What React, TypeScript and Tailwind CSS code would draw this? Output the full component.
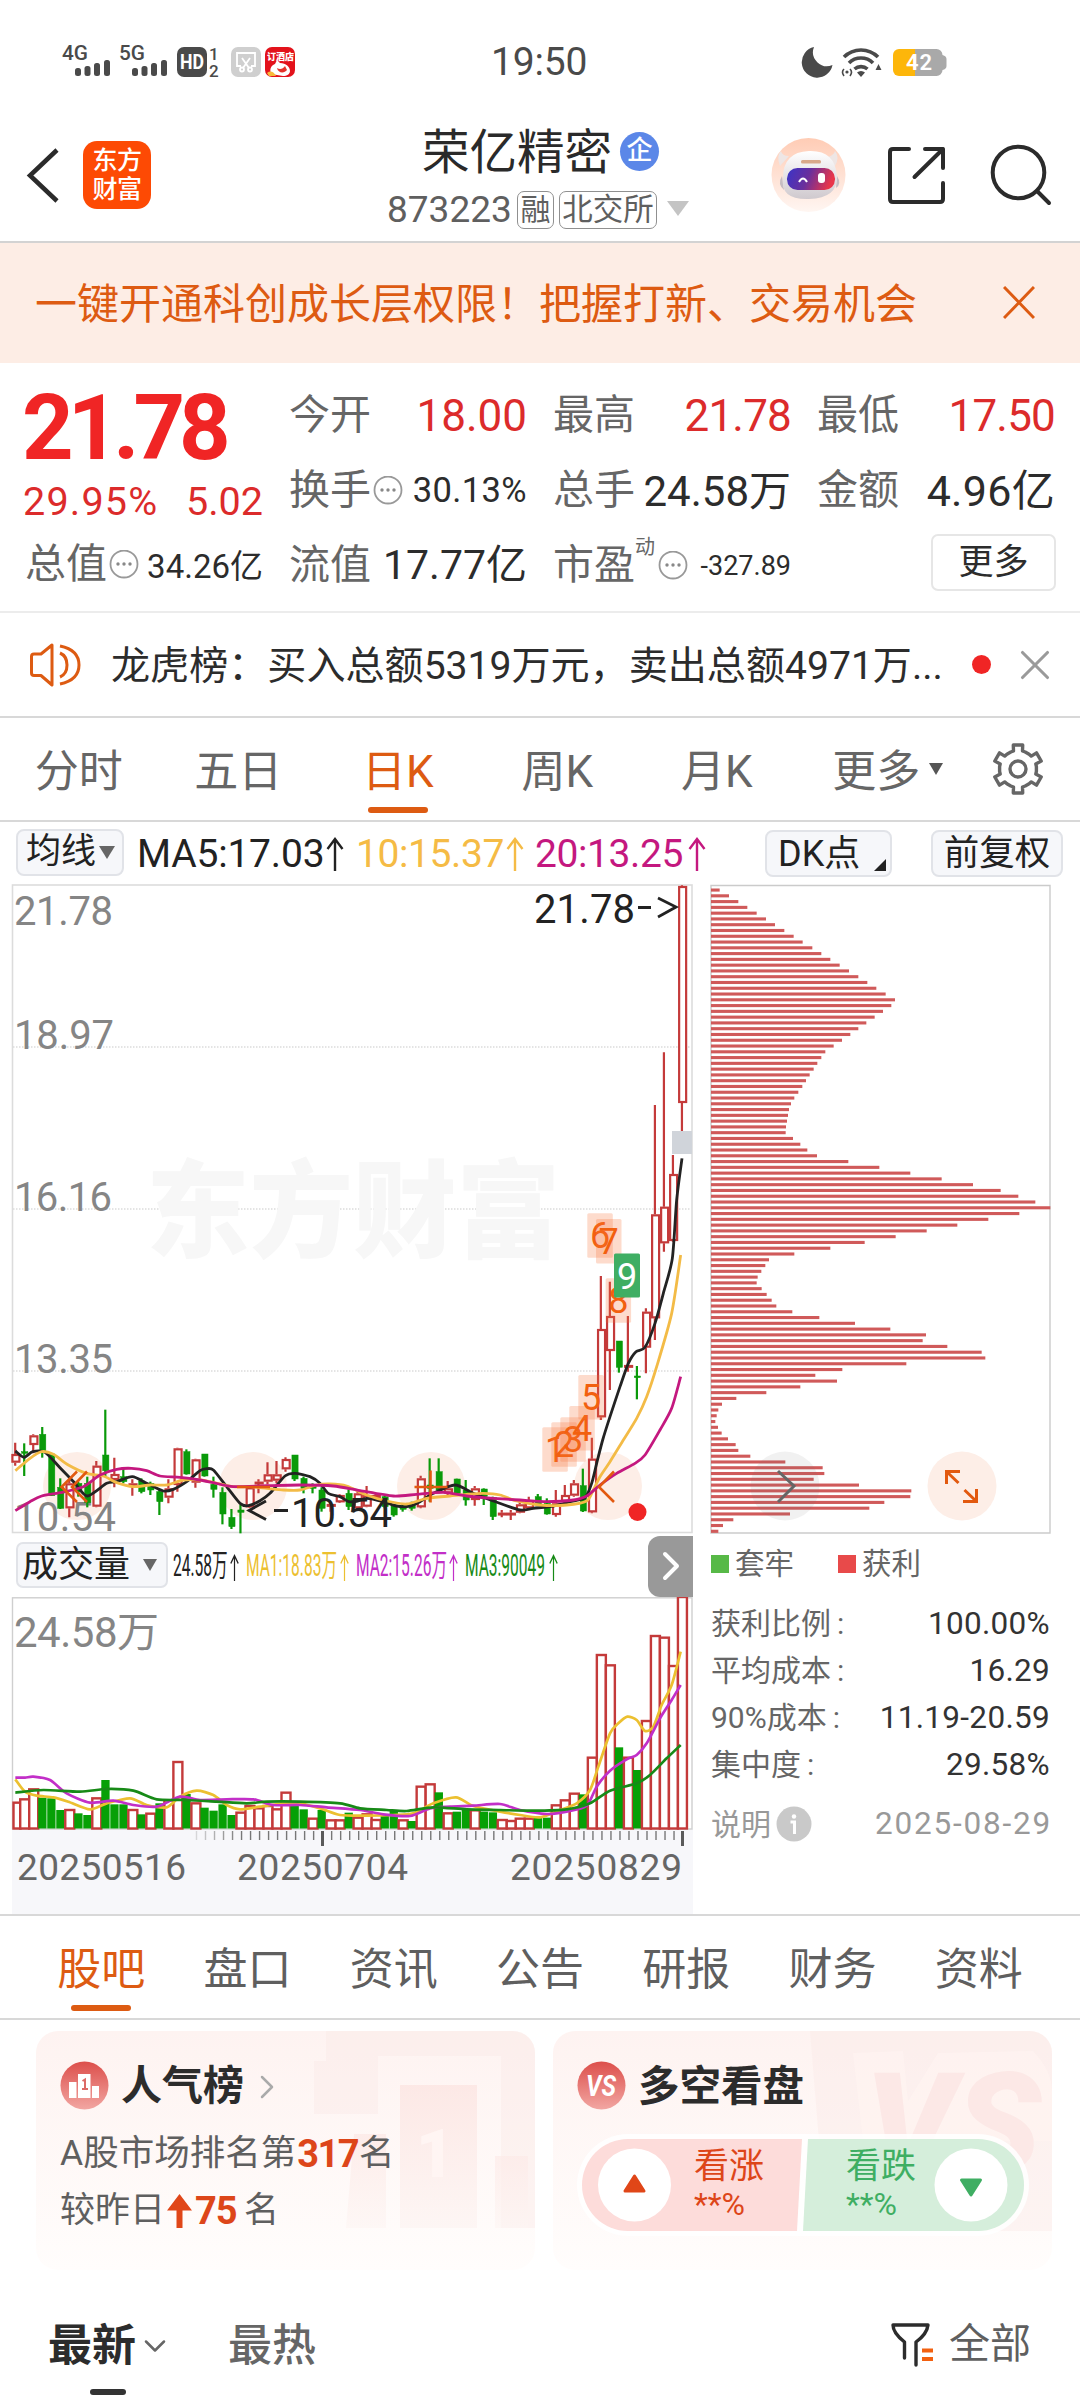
import React from 'react';
import { ChevronRight, ChevronDown, X } from 'lucide-react';

type Pt = [number, number];
type Candle = [number, number, number, number, 0 | 1];

const UP = '#c43a3a';
const DOWN = '#0a9a0a';

// high, body top, body bottom, low, rising — measured in thirds of a pixel below y=1200
const candles: Candle[] = [
  [728, 762, 788, 797, 1], [730, 755, 760, 828, 0], [703, 706, 735, 760, 1], [681, 703, 757, 773, 0],
  [760, 762, 887, 888, 0], [835, 862, 925, 927, 0], [840, 850, 925, 952, 1], [845, 850, 875, 890, 0],
  [830, 850, 908, 922, 0], [783, 797, 920, 922, 1], [629, 765, 812, 830, 0], [773, 822, 840, 862, 1],
  [803, 830, 845, 850, 0], [838, 850, 853, 887, 1], [835, 843, 875, 880, 0], [845, 850, 870, 885, 0],
  [868, 875, 905, 945, 0], [838, 865, 893, 910, 1], [743, 745, 855, 875, 1], [748, 755, 822, 824, 0],
  [776, 778, 848, 863, 1], [762, 762, 828, 830, 0], [830, 853, 868, 893, 0], [862, 877, 942, 973, 0],
  [927, 952, 980, 987, 0], [915, 930, 937, 1000, 0], [860, 862, 922, 924, 1], [838, 845, 850, 880, 1],
  [787, 823, 845, 853, 1], [783, 823, 842, 850, 1], [772, 777, 808, 815, 1], [765, 765, 837, 843, 0],
  [830, 835, 865, 880, 0], [850, 858, 865, 880, 0], [862, 870, 925, 935, 0], [907, 912, 918, 935, 1],
  [883, 885, 907, 909, 1], [868, 880, 920, 930, 0], [870, 880, 925, 928, 1], [858, 885, 920, 922, 1],
  [880, 885, 895, 900, 1], [888, 890, 920, 925, 0], [912, 915, 945, 950, 0], [910, 920, 928, 935, 0],
  [905, 912, 925, 932, 0], [827, 835, 922, 925, 1], [775, 855, 865, 905, 0], [775, 815, 870, 880, 0],
  [843, 865, 880, 890, 1], [836, 837, 880, 882, 0], [840, 870, 900, 917, 0], [858, 865, 900, 917, 1],
  [865, 867, 890, 915, 0], [890, 893, 950, 960, 0], [930, 938, 942, 952, 1], [930, 938, 942, 960, 1],
  [905, 913, 938, 940, 1], [890, 900, 925, 928, 1], [882, 890, 915, 918, 0], [895, 910, 942, 944, 0],
  [870, 910, 945, 950, 1], [855, 885, 905, 915, 1], [840, 850, 887, 890, 1], [806, 857, 933, 936, 0],
  [713, 776, 937, 940, 1], [228, 387, 652, 660, 1], [245, 348, 453, 570, 1], [423, 423, 502, 518, 0],
  [348, 495, 500, 515, 1], [498, 528, 533, 598, 0], [325, 335, 443, 520, 1], [-285, 43, 355, 420, 1],
  [-443, 20, 130, 155, 1], [-135, -78, 123, 125, 1], [-944, -942, -291, -204, 1],
];

const ma5: Pt[] = [[46, 753], [72, 772], [98, 755], [135, 757], [180, 803], [225, 850], [262, 888], [320, 850], [350, 845], [397, 830], [440, 850], [490, 873], [520, 868], [560, 845], [600, 812], [620, 806], [640, 810], [680, 860], [720, 910], [745, 917], [780, 902], [810, 880], [855, 828], [885, 820], [930, 830], [960, 850], [985, 880], [1020, 890], [1047, 905], [1073, 903], [1100, 895], [1150, 905], [1190, 918], [1230, 918], [1260, 905], [1300, 880], [1365, 855], [1420, 880], [1480, 903], [1560, 930], [1600, 925], [1660, 918], [1710, 905], [1755, 893], [1775, 850], [1790, 790], [1808, 720], [1830, 650], [1860, 560], [1885, 490], [1908, 455], [1935, 442], [1965, 370], [1990, 280], [2017, 175], [2030, 0], [2046, -125]];
const ma10: Pt[] = [[46, 812], [90, 775], [125, 755], [160, 763], [205, 795], [260, 820], [310, 828], [350, 848], [400, 860], [450, 855], [500, 855], [550, 840], [600, 840], [640, 847], [700, 860], [750, 860], [800, 865], [850, 870], [900, 870], [950, 855], [990, 852], [1040, 858], [1100, 885], [1160, 903], [1220, 912], [1280, 895], [1350, 888], [1400, 883], [1450, 880], [1500, 885], [1550, 903], [1620, 915], [1700, 915], [1760, 903], [1780, 870], [1800, 830], [1830, 785], [1870, 720], [1910, 655], [1940, 590], [1970, 500], [2015, 340], [2042, 165]];
const ma20: Pt[] = [[46, 932], [90, 905], [125, 888], [180, 878], [250, 860], [300, 825], [350, 808], [395, 805], [440, 812], [480, 828], [540, 832], [600, 840], [640, 848], [700, 860], [800, 857], [900, 855], [1000, 858], [1080, 872], [1180, 888], [1250, 883], [1330, 877], [1400, 888], [1480, 895], [1560, 900], [1640, 905], [1720, 900], [1760, 888], [1800, 855], [1850, 820], [1905, 790], [1935, 765], [1980, 690], [2015, 625], [2042, 530]];

// bar tops below y=1520, base line at 925; G marks a falling day
const volumes = '845 835 805 833G 835G 870G 867 880G 885G 832 780G 853G 853G 867 883G 878 850G 838 723 822G 847 863G 872G 853G 885G 875 855 862 855 865 815 855G 868G 893 870G 898 898 878G 890 880 897 888G 872G 898 903G 797 790 817G 877 875G 868G 868 875G 877G 897 900 893 893 893G 893G 853 838 818 823G 710 402 433 682G 710 750G 600 345 350 435 228'
  .split(' ')
  .map((v) => ({ top: parseInt(v, 10), down: v.endsWith('G') }));

const vol5: Pt[] = [[46, 778], [75, 815], [110, 827], [160, 832], [205, 845], [270, 868], [320, 850], [390, 835], [440, 855], [500, 862], [540, 830], [590, 812], [640, 825], [680, 855], [720, 868], [780, 860], [850, 850], [900, 850], [960, 865], [1020, 885], [1100, 887], [1180, 885], [1240, 880], [1300, 850], [1368, 832], [1420, 858], [1500, 875], [1560, 885], [1620, 892], [1680, 870], [1730, 850], [1770, 810], [1795, 740], [1830, 640], [1855, 610], [1882, 590], [1910, 600], [1935, 633], [1960, 620], [1985, 555], [2015, 495], [2042, 395]];
const vol10: Pt[] = [[46, 773], [75, 773], [100, 770], [150, 780], [200, 820], [270, 848], [340, 842], [400, 855], [470, 860], [540, 830], [600, 840], [680, 838], [760, 838], [820, 855], [900, 855], [980, 862], [1080, 870], [1150, 883], [1230, 888], [1290, 865], [1350, 860], [1420, 857], [1500, 852], [1560, 870], [1640, 882], [1700, 875], [1760, 857], [1790, 800], [1830, 752], [1880, 718], [1910, 705], [1940, 670], [1980, 595], [2015, 540], [2042, 495]];
const vol20: Pt[] = [[46, 818], [130, 810], [240, 815], [320, 807], [400, 812], [470, 838], [560, 840], [650, 845], [740, 850], [800, 845], [900, 845], [1020, 850], [1080, 865], [1160, 870], [1220, 873], [1300, 862], [1400, 868], [1500, 870], [1600, 872], [1700, 868], [1770, 850], [1830, 812], [1910, 790], [1950, 765], [2000, 715], [2042, 675]];

const chips = [
  88, 116, 144, 171, 199, 227, 254, 282, 310, 337, 366, 393, 420, 448, 476, 504, 531, 558, 586, 614, 603, 578, 553, 528,
  504, 480, 455, 430, 405, 393, 381, 370, 358, 347, 336, 324, 312, 302, 296, 293, 290, 287, 286, 308, 330, 351, 380, 474,
  567, 660, 754, 848, 931, 984, 1035, 1080, 987, 894, 801, 709, 616, 523, 420, 312, 236, 225, 213, 202, 199, 214, 229, 244,
  258, 306, 387, 494, 600, 707, 697, 771, 874, 885, 648, 456, 375, 440, 330, 228, 138, 95, 84, 79, 75, 83, 94, 113, 136,
  144, 180, 285, 397, 402, 370, 506, 663, 660, 582, 537, 299, 129, 98, 84,
];

// x, y of the top-left corner of every countdown mark
const marks: [string, number, number][] = [
  ['1', 542.3, 1427.3], ['2', 551.3, 1422.3], ['3', 560.3, 1417.3], ['4', 569.3, 1406],
  ['5', 578.3, 1375], ['6', 587.3, 1213.3], ['7', 596, 1219], ['8', 605.6, 1278.3],
];

const candleX = (i: number) => 15.2 + i * 9.01;

const curve = (pts: Pt[], y0: number) => {
  const p = pts.map(([x, y]) => [x / 3, y0 + y / 3]);
  let d = `M${p[0][0]} ${p[0][1]}`;
  for (let i = 0; i < p.length - 1; i++) {
    const a = p[i - 1] || p[i];
    const b = p[i];
    const c = p[i + 1];
    const e = p[i + 2] || c;
    d += `C${b[0] + (c[0] - a[0]) / 8} ${b[1] + (c[1] - a[1]) / 8} ${c[0] - (e[0] - b[0]) / 8} ${c[1] - (e[1] - b[1]) / 8} ${c[0]} ${c[1]}`;
  }
  return d;
};

const StatusBar = () => (
  <div className="h-[100px] flex items-start pt-[40px] text-[#4a4a4a]">
    <svg className="ml-[58px]" width="240" height="44" viewBox="58 40 240 44">
      <g fill="#4a4a4a" fontFamily="Roboto" fontWeight="500">
        <text x="62" y="60" fontSize="21" textLength="26" lengthAdjust="spacingAndGlyphs">4G</text>
        <text x="119" y="60" fontSize="21" textLength="26" lengthAdjust="spacingAndGlyphs">5G</text>
        <text x="209" y="59.500" fontSize="17">1</text>
        <text x="209" y="76.500" fontSize="17">2</text>
      </g>
      {[0, 57].map((dx) => (
        <g key={dx} fill="#4a4a4a">
          <rect x={75 + dx} y="68" width="6" height="8" rx="2.5" />
          <rect x={84.5 + dx} y="66" width="6" height="10" rx="2.5" />
          <rect x={94 + dx} y="63" width="6" height="13" rx="2.5" />
          <rect x={104 + dx} y="60" width="6" height="16" rx="2.5" />
        </g>
      ))}
      <rect x="177" y="47" width="30" height="30" rx="7" fill="#4a4a4a" />
      <text x="180" y="69" fontSize="20" fontWeight="700" fontFamily="Roboto" fill="#fff" textLength="24" lengthAdjust="spacingAndGlyphs">HD</text>
      <rect x="231" y="47" width="30" height="30" rx="7" fill="#cfcfcf" />
      <g fill="none" stroke="#fff" strokeWidth="1.800">
        <path d="M241 66h-4V53h18v13h-4M242 58l7 10M250 58l-7 10" />
        <circle cx="242" cy="69.500" r="2" />
        <circle cx="250" cy="69.500" r="2" />
      </g>
      <rect x="265" y="47" width="30" height="30" rx="7" fill="#e3121b" />
      <text x="267" y="60" fontSize="9" fontWeight="800" fontFamily="Noto Sans CJK SC" fill="#fff">订酒店</text>
      <path d="M271 74c-2-6 1-9 4-10l2-4 3 3c6 0 10 4 10 8 0 3-3 5-7 5z" fill="#fff" />
      <path d="M277 68c3 2 6 1 8-2l2 4c-3 4-9 3-10-2z" fill="#e3322a" />
      <path d="M267 73q5-4 9 3h-7z" fill="#f8b93a" />
    </svg>
    <span className="ml-[193px] w-[110px] text-[39px] leading-[44px] tracking-[-0.2px]">19:50</span>
    <svg className="ml-[199px] mt-[6px]" width="150" height="32" viewBox="800 46 150 32">
      <path d="M814 47a15.500 15.500 0 1 0 18.500 18A14 14 0 0 1 814 47z" fill="#4a4a4a" />
      <g fill="none" stroke="#4a4a4a" strokeWidth="3.600">
        <path d="M844 57a24 24 0 0 1 34 0" />
        <path d="M849 63a17 17 0 0 1 24 0" />
        <path d="M854.500 69a10 10 0 0 1 13 0" />
      </g>
      <path d="M861 77l-4-4.500a6 6 0 0 1 8 0zM875.500 70h6l-3-6z" fill="#4a4a4a" />
      <circle cx="847" cy="72" r="1.600" fill="#4a4a4a" />
      <path d="M844 69q-3 3 0 7M850 69q3 3 0 7" stroke="#4a4a4a" strokeWidth="1.600" fill="none" />
      <path d="M914.500 49h22a6 6 0 0 1 6 6q4 1 4 4v7q0 3-4 4a6 6 0 0 1-6 6h-22z" fill="#a9a9a9" />
      <path d="M899 49h16v27h-16a6 6 0 0 1-6-6V55a6 6 0 0 1 6-6z" fill="#fdb60a" />
      <text x="906" y="70" fontSize="22" fontWeight="600" fontFamily="Roboto" fill="#fff" textLength="26">42</text>
    </svg>
  </div>
);

const Header = () => (
  <div className="h-[143px] flex items-start border-b-2 border-[#d3d3d3]">
    <svg className="ml-[24px] mt-[46px]" width="40" height="60" viewBox="24 146 40 60" fill="none" stroke="#2b2b2b" strokeWidth="4.500">
      <path d="M57 150L30 175.500L57 201" />
    </svg>
    <div className="ml-[19px] mt-[41px] w-[68px] h-[68px] rounded-[14px] bg-[#fd4a04] text-white text-[25px] leading-[29px] font-medium flex flex-col items-center justify-center tracking-[-0.5px]">
      <span>东方</span>
      <span>财富</span>
    </div>
    <div className="ml-[235px] w-[306px] mt-[26px]">
      <div className="flex items-center pl-[36px] h-[54px]">
        <span className="text-[47.5px] leading-[54px] text-[#2a2a2a]">荣亿精密</span>
        <span className="ml-[8px] -mt-[3px] w-[39px] h-[39px] rounded-full bg-[#5b87e8] text-white text-[26px] leading-[37px] text-center font-medium">企</span>
      </div>
      <div className="flex items-center mt-[10px] h-[39px] text-[#5f5f5f]">
        <span className="text-[37px] leading-[39px] w-[130px] pl-[1px]">873223</span>
        <span className="ml-[1px] w-[37px] h-[38px] border-[1.5px] border-[#909090] rounded-[7px] text-[30px] leading-[35px] text-center">融</span>
        <span className="ml-[5px] w-[98px] h-[38px] border-[1.5px] border-[#909090] rounded-[7px] text-[30.5px] leading-[35px] text-center">北交所</span>
        <span className="ml-[10px] mt-[-2px] border-x-[11px] border-x-transparent border-t-[15px] border-t-[#c4c4c4]" />
      </div>
    </div>
    <svg className="ml-[74px] mt-[34px]" width="290" height="90" viewBox="766 134 290 90">
      <defs>
        <linearGradient id="halo" x1="0" y1="0" x2="0" y2="1">
          <stop offset="0" stopColor="#ffccb5" />
          <stop offset="1" stopColor="#fff6f2" />
        </linearGradient>
        <linearGradient id="visor" x1="0" y1="0" x2="1" y2="0.2">
          <stop offset="0" stopColor="#3a34c8" />
          <stop offset="0.5" stopColor="#6a2f9c" />
          <stop offset="1" stopColor="#e8364a" />
        </linearGradient>
        <linearGradient id="shell" x1="0" y1="0" x2="0" y2="1">
          <stop offset="0" stopColor="#ffffff" />
          <stop offset="1" stopColor="#cfc9ce" />
        </linearGradient>
      </defs>
      <circle cx="808.500" cy="175" r="37" fill="url(#halo)" />
      <path d="M780 166q-4-10 1-15q1 5 8 5zM835 166q5-9 0-15q-1 4-7 6z" fill="#eee6e5" />
      <path d="M782 176q-5 8 2 14zM837 176q5 8-1 12z" fill="#c5bcc2" />
      <path d="M783 178q0-26 26-27t28 25q1 22-28 23t-26-21z" fill="url(#shell)" />
      <rect x="787" y="168" width="48" height="22" rx="10.500" fill="url(#visor)" />
      <path d="M799 182q4-7 8 0" fill="none" stroke="#fff" strokeWidth="2" />
      <rect x="818" y="173" width="7" height="10" rx="3" fill="#fff" />
      <rect x="801" y="160" width="20" height="3.500" rx="1.500" fill="#d9a98a" />
      <g fill="none" stroke="#2b2b2b" strokeWidth="4" strokeLinejoin="round" strokeLinecap="round">
        <path d="M909 149H893q-3 0-3 3V199q0 3 3 3H940q3 0 3-3V183" />
        <path d="M925 149H943V168M943 149L914.500 177" />
        <circle cx="1018.500" cy="172.500" r="25.800" />
        <path d="M1037 191L1049 203" />
      </g>
    </svg>
  </div>
);

const Dots = () => (
  <svg className="shrink-0" width="30" height="30" viewBox="0 0 30 30">
    <circle cx="15" cy="14" r="13.500" fill="none" stroke="#999" strokeWidth="1.800" />
    <circle cx="9" cy="14" r="1.700" fill="#888" />
    <circle cx="15" cy="14" r="1.700" fill="#888" />
    <circle cx="21" cy="14" r="1.700" fill="#888" />
  </svg>
);

const Label = ({ children }: { children: React.ReactNode }) => (
  <span className="text-[41px] text-[#666] whitespace-nowrap">{children}</span>
);

const Quote = () => (
  <div className="h-[250px] px-[25px] border-b-2 border-[#ececec] flex gap-[26px] text-[#2c2c2c] whitespace-nowrap">
    <div className="w-[238px] pt-[33px]">
      <div className="h-[66px] leading-[66px] text-[90px] font-bold text-[#f02525] tracking-[-6px] -ml-[3px]">21.78</div>
      <div className="h-[44px] mt-[18px] leading-[44px] text-[39.5px] text-[#dc2b2b] flex justify-between -ml-[2px]">
        <span className="tracking-[1.2px]">29.95%</span>
        <span>5.02</span>
      </div>
      <div className="h-[50px] mt-[16px] flex items-center">
        <Label>总值</Label>
        <span className="w-[2px]" />
        <Dots />
        <span className="text-[33px] ml-auto pt-[4px]">34.26亿</span>
      </div>
    </div>
    <div className="w-[238px] pt-[28px]">
      <div className="h-[50px] flex items-center justify-between">
        <Label>今开</Label>
        <span className="text-[44px] text-[#dc2b2b]">18.00</span>
      </div>
      <div className="h-[50px] mt-[25px] flex items-center">
        <Label>换手</Label>
        <span className="w-[2px]" />
        <Dots />
        <span className="text-[34.5px] ml-auto tracking-[0.4px]">30.13%</span>
      </div>
      <div className="h-[50px] mt-[25px] flex items-center justify-between">
        <Label>流值</Label>
        <span className="text-[41px]">17.77亿</span>
      </div>
    </div>
    <div className="w-[238px] pt-[28px]">
      <div className="h-[50px] flex items-center justify-between">
        <Label>最高</Label>
        <span className="text-[44px] text-[#dc2b2b] tracking-[-0.8px]">21.78</span>
      </div>
      <div className="h-[50px] mt-[25px] flex items-center justify-between">
        <Label>总手</Label>
        <span className="text-[42px]">24.58万</span>
      </div>
      <div className="h-[50px] mt-[25px] flex items-center">
        <Label>市盈</Label>
        <span className="text-[20px] leading-[20px] text-[#666] self-start -mt-[4px] w-[23px]">动</span>
        <Dots />
        <span className="text-[27px] ml-auto">-327.89</span>
      </div>
    </div>
    <div className="w-[238px] pt-[28px]">
      <div className="h-[50px] flex items-center justify-between">
        <Label>最低</Label>
        <span className="text-[44px] text-[#dc2b2b] tracking-[-0.8px]">17.50</span>
      </div>
      <div className="h-[50px] mt-[25px] flex items-center justify-between">
        <Label>金额</Label>
        <span className="text-[43px] tracking-[0.3px]">4.96亿</span>
      </div>
      <div className="mt-[18px] ml-auto -mr-[1px] w-[125px] h-[57px] border-2 border-[#e6e6e6] rounded-[7px] text-[35px] leading-[53px] text-center">更多</div>
    </div>
  </div>
);

const News = () => (
  <div className="h-[105px] flex items-center border-b-2 border-[#d8d8d8]">
    <svg className="ml-[28px]" width="56" height="50" viewBox="28 640 56 50" fill="none" stroke="#dd5b12" strokeWidth="3" strokeLinejoin="round">
      <path d="M52 645L41 654H34q-2.500 0-2.500 2.500V673q0 2.500 2.500 2.500h7l11 9.500z" />
      <path d="M60 653q7 3 7 12t-7 12" />
      <path d="M60 646q19 4 19 19t-19 19" />
    </svg>
    <span className="ml-[27px] pt-[2px] w-[841px] text-[39.1px] leading-[50px] text-[#2c2c2c] whitespace-nowrap">龙虎榜：买入总额5319万元，卖出总额4971万...</span>
    <span className="ml-[20px] w-[19px] h-[19px] rounded-full bg-[#f02525]" />
    <X className="ml-[19px] w-[50px] h-[50px] text-[#9a9a9a]" strokeWidth={1.5} />
  </div>
);

const gearPath = () => {
  const out: string[] = [];
  for (let k = 0; k < 6; k++) {
    const a = -90 + k * 60;
    [[-23, 18.5], [-14, 18.5], [-11, 24.5], [11, 24.5], [14, 18.5], [23, 18.5]].forEach(([da, r]) => {
      const t = ((a + da) * Math.PI) / 180;
      out.push(`${(26 + r * Math.cos(t)).toFixed(1)} ${(26 + r * Math.sin(t)).toFixed(1)}`);
    });
  }
  return `M${out.join('L')}Z`;
};

const KTabs = () => {
  const tabs = ['分时', '五日', '日K', '周K', '月K', '更多'];
  return (
    <div className="h-[104px] flex items-center border-b-2 border-[#d8d8d8]">
      {tabs.map((t) => (
        <div
          key={t}
          className={`relative w-[159.5px] h-full flex items-center justify-center text-[44px] pt-[6px] pr-[2px] ${
            t === '日K' ? 'text-[#dd5b12]' : 'text-[#666]'
          }`}
        >
          {t}
          {t === '日K' && <span className="absolute bottom-[7px] w-[60px] h-[6px] rounded-full bg-[#dd5b12]" />}
          {t === '更多' && (
            <span className="absolute left-[131px] top-[45px] border-x-[7.5px] border-x-transparent border-t-[12px] border-t-[#555]" />
          )}
        </div>
      ))}
      <svg className="ml-[35px]" width="52" height="52" viewBox="0 0 52 52" fill="none" stroke="#666" strokeWidth="3.400" strokeLinejoin="round">
        <path d={gearPath()} />
        <circle cx="26" cy="26" r="8" />
      </svg>
    </div>
  );
};

const Arrow = ({ className, w = 18, h = 34 }: { className?: string; w?: number; h?: number }) => (
  <svg className={className} width={w} height={h} viewBox="0 0 18 34" preserveAspectRatio="none" fill="none" stroke="currentColor" strokeWidth="2.400">
    <path d="M9 34V2M1.500 12L9 2L16.500 12" />
  </svg>
);

const MaRow = () => (
  <div className="h-[62px] flex items-start pt-[7px] whitespace-nowrap">
    <div className="ml-[16px] w-[108px] h-[47px] rounded-[8px] border-2 border-[#e1e3e8] bg-[#f6f7fa] flex items-center pl-[8px] text-[35px] text-[#222]">
      均线
      <span className="ml-[3px] border-x-[8px] border-x-transparent border-t-[13px] border-t-[#666]" />
    </div>
    <div className="ml-[13px] h-[50px] flex items-center text-[39px] text-[#222]">
      <span className="w-[189px] tracking-[-0.2px]">MA5:17.03</span>
      <Arrow />
    </div>
    <div className="ml-[12px] h-[50px] flex items-center text-[39px] text-[#f5bb45]">
      <span className="w-[150px] tracking-[-0.4px]">10:15.37</span>
      <Arrow />
    </div>
    <div className="ml-[11px] h-[50px] flex items-center text-[39px] text-[#c4187f]">
      <span className="w-[153px] tracking-[-0.4px]">20:13.25</span>
      <Arrow />
    </div>
    <div className="relative ml-[59px] mt-[1px] w-[127px] h-[47px] rounded-[8px] border-2 border-[#e1e3e8] bg-[#f6f7fa] flex items-center pl-[11px] text-[36px] text-[#222]">
      DK点
      <span className="absolute right-[4px] bottom-[4px] border-l-[12px] border-l-transparent border-b-[12px] border-b-[#222]" />
    </div>
    <div className="ml-[39px] mt-[1px] w-[132px] h-[47px] rounded-[8px] border-2 border-[#e1e3e8] bg-[#f6f7fa] flex items-center justify-center text-[35.5px] text-[#222]">
      前复权
    </div>
  </div>
);

const KChart = () => (
  <svg className="block" width="700" height="651" viewBox="0 884 700 651" fontFamily="Roboto">
    <rect x="12.500" y="885" width="679.500" height="647.500" fill="#fff" stroke="#dcdcdc" strokeWidth="1.600" />
    <g stroke="#dcdcdc" strokeWidth="1.500" strokeDasharray="1.500 1.500">
      <path d="M13 1047H691M13 1209H691M13 1371H691" />
    </g>
    <text x="146" y="1249" fontSize="106" fontWeight="900" fontFamily="Noto Sans CJK SC" fill="#f7f7f7" textLength="414" lengthAdjust="spacingAndGlyphs">东方财富</text>
    {[77, 253, 431, 608].map((cx) => (
      <circle key={cx} cx={cx} cy="1486" r="34" fill="#fdeee7" />
    ))}
    <g fill="#858585" fontSize="40">
      <text x="14" y="924.500" textLength="99">21.78</text>
      <text x="14" y="1049" textLength="100">18.97</text>
      <text x="14" y="1211" textLength="98">16.16</text>
      <text x="14" y="1372.500" textLength="99">13.35</text>
      <text x="14" y="1531" textLength="102">10.54</text>
    </g>
    {candles.map(([hi, top, bot, lo, up], i) => {
      const x = candleX(i);
      const y = (v: number) => 1200 + v / 3;
      return (
        <g key={i} stroke={up ? UP : DOWN} strokeWidth="2.200">
          {up ? (
            <>
              <path d={`M${x} ${y(hi)}V${y(top)}M${x} ${y(bot)}V${y(lo)}`} />
              <rect x={x - 2.8} y={y(top) + 1} width="7" height={Math.max(0.8, (bot - top) / 3 - 2)} fill="#fff" />
            </>
          ) : (
            <>
              <path d={`M${x} ${y(hi)}V${y(lo)}`} />
              <rect x={x - 2.6} y={y(top)} width="6.200" height={Math.max(0.6, (bot - top) / 3)} fill={DOWN} strokeWidth="0.500" />
            </>
          )}
        </g>
      );
    })}
    <rect x="672" y="1131" width="20" height="23" fill="#d0d4da" />
    {marks.map(([n, x, y]) => (
      <g key={n}>
        <rect x={x} y={y} width="25.500" height="44.500" rx="1.500" fill="#f9723a" fillOpacity="0.26" />
        <text x={x + 12.7} y={y + 35} fontSize="36" textAnchor="middle" fill="#f2600f">{n}</text>
      </g>
    ))}
    <rect x="614" y="1253.500" width="26" height="44" rx="1.500" fill="#3fae63" />
    <text x="627" y="1288.500" fontSize="36" textAnchor="middle" fill="#fff">9</text>
    <g fill="none" strokeWidth="2.800" strokeLinejoin="round">
      <path d={curve(ma5, 1200)} stroke="#232323" />
      <path d={curve(ma10, 1200)} stroke="#f3bb46" />
      <path d={curve(ma20, 1200)} stroke="#c4187f" />
    </g>
    <g fill="none" stroke="#e2590f" strokeWidth="2.600">
      <path d="M77 1471.500L61.500 1487L77 1502M87 1471.500L72 1487L87 1502" />
      <path d="M237 1487H270" />
      <path d="M414.500 1487H447.500M430.500 1470.500V1502.500" />
      <path d="M614 1471.500L599 1487L614 1502" />
    </g>
    <circle cx="637.500" cy="1512" r="9" fill="#f02525" />
    <g fill="#222" fontSize="40">
      <text x="534" y="923" textLength="101">21.78</text>
      <text x="291" y="1527" textLength="101">10.54</text>
    </g>
    <g fill="none" stroke="#222" strokeWidth="2.800">
      <path d="M638 907.500H651M658 898L676 907L658 917M274 1510.500H288M266 1501L249 1510.500L266 1519.500" />
    </g>
  </svg>
);

const VolumeHeader = () => (
  <div className="h-[62px] flex items-center whitespace-nowrap">
    <div className="ml-[16px] -mt-[2px] w-[152px] h-[46px] rounded-[7px] border-2 border-[#e1e3e8] bg-[#f6f7fa] flex items-center pl-[4px] text-[36px] text-[#222]">
      成交量
      <span className="ml-[13px] border-x-[7.5px] border-x-transparent border-t-[12px] border-t-[#666]" />
    </div>
    {[
      ['24.58万', 'text-[#222]', 'w-[56px]'],
      ['MA1:18.83万', 'text-[#ecc030]', 'w-[92px]'],
      ['MA2:15.26万', 'text-[#c22fc8]', 'w-[92px]'],
      ['MA3:90049', 'text-[#178a17]', 'w-[82px]'],
    ].map(([t, color, w]) => (
      <div key={t} className={`flex items-center ${color} ml-[4.5px] pr-[2.5px]`}>
        <span className={w}>
          <span className="inline-block origin-left scale-x-[0.51] text-[30.5px] leading-[40px] w-0">{t}</span>
        </span>
        <Arrow className="ml-[1.5px] mt-[2px]" w={9} h={27} />
      </div>
    ))}
    <div className="ml-auto mr-[7px] w-[45px] h-[61px] rounded-l-[12px] bg-[#999] flex items-center justify-center">
      <svg width="18" height="30" viewBox="0 0 18 30" fill="none" stroke="#fff" strokeWidth="4" strokeLinecap="round" strokeLinejoin="round">
        <path d="M3 3L15 15L3 27" />
      </svg>
    </div>
  </div>
);

const VolumeChart = () => (
  <svg className="block" width="700" height="317" viewBox="0 1597 700 317" fontFamily="Roboto, 'Noto Sans CJK SC'">
    <rect x="12" y="1829" width="681" height="85" fill="#f7f7fa" />
    <rect x="12.500" y="1597.800" width="679.500" height="231.200" fill="#fff" stroke="#cfcfcf" strokeWidth="1.400" />
    <text x="14" y="1646.500" fontSize="42" fill="#858585" textLength="145">24.58万</text>
    {volumes.map((v, i) => {
      const x = candleX(i);
      const y = 1520 + v.top / 3;
      return v.down ? (
        <rect key={i} x={x - 4} y={y} width="8.300" height={1828.5 - y} fill="#06a006" />
      ) : (
        <rect key={i} x={Math.max(13.5, x - 4)} y={y + 1} width={i ? 9 : 7} height={1827.5 - y} fill="#fff" stroke={UP} strokeWidth="2.400" />
      );
    })}
    <g fill="none" strokeWidth="2.700" strokeLinejoin="round">
      <path d={curve(vol5, 1520)} stroke="#ecc030" />
      <path d={curve(vol10, 1520)} stroke="#c22fc8" />
      <path d={curve(vol20, 1520)} stroke="#178a17" />
    </g>
    {Array.from({ length: 54 }, (_, i) => (
      <path key={i} d={`M${196.5 + i * 9.01} 1831V1840`} stroke="#777" strokeWidth="1.400" opacity={Math.min(1, 0.25 + i * 0.15)} />
    ))}
    <path d="M322.500 1831V1846M682.500 1831V1846" stroke="#5a5a5a" strokeWidth="3" />
    <g fill="#666" fontSize="37">
      <text x="17" y="1880" textLength="169">20250516</text>
      <text x="237" y="1880" textLength="171">20250704</text>
      <text x="510" y="1880" textLength="172">20250829</text>
    </g>
  </svg>
);

const ChipChart = () => (
  <svg className="block" width="380" height="651" viewBox="700 884 380 651">
    <path d="M711 885.500H1050V1533H711z" fill="#fff" stroke="#cbcbcb" strokeWidth="1.400" />
    {chips.map((v, i) => (
      <rect key={i} x="711" y={888.5 + i * 5.777} width={(v - 62) / 3} height="3.100" fill="#d05a5a" />
    ))}
    <circle cx="785" cy="1486" r="34.500" fill="#777" fillOpacity="0.1" />
    <path d="M778 1471L794 1486L778 1502" fill="none" stroke="#666" strokeWidth="3" />
    <circle cx="962" cy="1486" r="34.500" fill="#fdeee7" />
    <g fill="none" stroke="#e2590f" strokeWidth="3">
      <path d="M946.500 1484V1471.500H960M947 1472L958.500 1483" />
      <path d="M976.500 1489V1501.500H963M976 1501L964.500 1490" />
    </g>
  </svg>
);

const ChipStats = () => {
  const rows = [
    ['获利比例', '100.00%'],
    ['平均成本', '16.29'],
    ['90%成本', '11.19-20.59'],
    ['集中度', '29.58%'],
  ];
  return (
    <div className="pl-[11px] pr-[30px] pt-[8px] text-[30px] text-[#666]">
      <div className="h-[42px] flex items-center">
        <span className="w-[18px] h-[18px] bg-[#57b947]" />
        <span className="ml-[6px] w-[103px] text-[29.5px]">套牢</span>
        <span className="w-[18px] h-[18px] bg-[#e84a4a]" />
        <span className="ml-[6px] text-[29.5px]">获利</span>
      </div>
      <div className="mt-[15px]">
        {rows.map(([k, v]) => (
          <div key={k} className="h-[47px] flex items-center justify-between">
            <span>
              {k}
              <span className="ml-[6px]">:</span>
            </span>
            <span className="text-[31.5px] text-[#333] tracking-[0.3px]">{v}</span>
          </div>
        ))}
      </div>
      <div className="mt-[10px] h-[52px] flex items-center text-[#999]">
        <span>说明</span>
        <svg className="ml-[5px]" width="36" height="36" viewBox="0 0 36 36">
          <circle cx="18" cy="18" r="17.500" fill="#c9c9c9" />
          <circle cx="18" cy="10.500" r="2.200" fill="#fff" />
          <path d="M14.500 16H18.500V28" fill="none" stroke="#fff" strokeWidth="3" />
        </svg>
        <span className="ml-auto text-[31.500px] tracking-[1.800px] -mr-[2px]">2025-08-29</span>
      </div>
    </div>
  );
};

const InfoTabs = () => {
  const tabs = ['股吧', '盘口', '资讯', '公告', '研报', '财务', '资料'];
  return (
    <div className="h-[106px] px-[28px] flex border-y-2 border-[#d8d8d8]">
      {tabs.map((t, i) => (
        <div
          key={t}
          className={`relative flex-1 flex items-center justify-center text-[44px] pt-[6px] ${
            i === 0 ? 'text-[#dd5b12]' : 'text-[#5f5f5f]'
          }`}
        >
          {t}
          {i === 0 && <span className="absolute bottom-[7px] w-[60px] h-[6px] rounded-full bg-[#dd5b12]" />}
        </div>
      ))}
    </div>
  );
};

const CardArt = ({ children }: { children: React.ReactNode }) => (
  <svg className="absolute inset-0" width="499" height="239" viewBox="0 0 499 239">
    <defs>
      <linearGradient id="art" x1="0" y1="0" x2="0" y2="1">
        <stop offset="0" stopColor="#fce6e3" />
        <stop offset="1" stopColor="#fdf5f3" />
      </linearGradient>
    </defs>
    {children}
  </svg>
);

const Cards = () => (
  <div className="pl-[36px] pt-[11px] flex gap-[18px] whitespace-nowrap">
    <div className="relative shrink-0 w-[499px] h-[239px] rounded-[22px] overflow-hidden bg-gradient-to-b from-[#fef3f1] to-[#fffdfc]">
      <CardArt>
        <path d="M290 0H499V197H465V25H342V83H278V30H290z" fill="#fbe8e5" opacity="0.4" />
        <path d="M364 54H441V197H364z" fill="url(#art)" opacity="0.85" />
        <path d="M318 103H350V197H310zM459 125H492V197H459z" fill="url(#art)" opacity="0.65" />
        <text x="380" y="146" fontSize="66" fontWeight="900" fontFamily="Roboto" fill="#fff5f3">1</text>
      </CardArt>
      <div className="relative pl-[24px] pt-[28px]">
        <div className="h-[56px] flex items-center">
          <svg className="-mt-[3px]" width="49" height="49" viewBox="0 0 49 49">
            <defs>
              <linearGradient id="badge" x1="0" y1="0" x2="0" y2="1">
                <stop offset="0" stopColor="#dc4f4b" />
                <stop offset="1" stopColor="#f2a6a2" />
              </linearGradient>
            </defs>
            <circle cx="24.500" cy="24.500" r="24" fill="url(#badge)" />
            <path d="M9 21h7.500v16H9zM18 13h12.500v24H18zM32 25h7v12h-7z" fill="#fff" />
            <path d="M22.500 20l2.500-1.500v9M22 28h6" stroke="#dc6a66" strokeWidth="2" fill="none" />
          </svg>
          <span className="ml-[12px] text-[41px] font-bold text-[#2c2c2c]">人气榜</span>
          <ChevronRight className="ml-[3px] w-[40px] h-[40px] text-[#aaa]" strokeWidth={1.5} />
        </div>
        <div className="mt-[13px] h-[52px] flex items-center text-[35.5px] text-[#5f5f5f]">
          A股市场排名第<span className="text-[38px] font-bold text-[#dd4619] tracking-[-1.5px] mx-[1px]">317</span>名
        </div>
        <div className="mt-[5px] h-[52px] flex items-center text-[35px] text-[#5f5f5f]">
          较昨日
          <svg className="ml-[2px]" width="25" height="34" viewBox="0 0 25 34">
            <path d="M12.500 0L25 16.500H15.500V34H9.500V16.500H0z" fill="#e04618" />
          </svg>
          <span className="ml-[3px] w-[49px] text-[38px] font-bold text-[#dd4619] tracking-[-1px]">75</span>名
        </div>
      </div>
    </div>
    <div className="relative shrink-0 w-[499px] h-[239px] rounded-[22px] overflow-hidden bg-gradient-to-b from-[#fef3f1] to-[#fffdfc]">
      <CardArt>
        <path d="M257 0H499V200H350L266 110z" fill="#fbe8e5" opacity="0.4" />
        <path d="M300 22L350 20L355 70L385 22L480 20Q499 40 499 60V110H310z" fill="#fff3f1" opacity="0.7" />
        <text x="312" y="142" fontSize="140" fontWeight="900" fontStyle="italic" fontFamily="Roboto" fill="#fce8e6" textLength="176" lengthAdjust="spacingAndGlyphs">VS</text>
      </CardArt>
      <div className="relative pl-[24px] pt-[28px]">
        <div className="h-[56px] flex items-center">
          <svg className="-mt-[3px]" width="49" height="49" viewBox="0 0 49 49">
            <circle cx="24.500" cy="24.500" r="24" fill="url(#badge)" />
            <text x="9" y="35" fontSize="29" fontWeight="700" fontStyle="italic" fontFamily="Roboto" fill="#fff" textLength="30" lengthAdjust="spacingAndGlyphs">VS</text>
          </svg>
          <span className="ml-[12px] text-[41.500px] font-bold text-[#2c2c2c]">多空看盘</span>
        </div>
        <div className="relative mt-[19px] w-[452px] h-[102px]">
          <svg className="absolute inset-0" width="452" height="102" viewBox="0 0 452 102">
            <rect x="0" y="0" width="452" height="102" rx="51" fill="#fff" fillOpacity="0.85" />
            <path d="M51 5H225L220 97H51A46 46 0 0 1 51 5z" fill="#fddcda" />
            <path d="M231 5H401A46 46 0 0 1 401 97H226z" fill="#d5eedb" />
            <circle cx="57.500" cy="51" r="36.500" fill="#fff" />
            <circle cx="394" cy="51" r="36.500" fill="#fff" />
            <path d="M57.500 42L67 57H48z" fill="#e04618" stroke="#e04618" strokeWidth="3" strokeLinejoin="round" />
            <path d="M394 61L403.500 46H384.500z" fill="#3fae63" stroke="#3fae63" strokeWidth="3" strokeLinejoin="round" />
          </svg>
          <div className="relative flex text-[35px]">
            <div className="ml-[117px] w-[152px] pt-[12px] text-[#dd4619]">
              <div className="leading-[42px]">看涨</div>
              <div className="leading-[32px] text-[32px]">**%</div>
            </div>
            <div className="pt-[12px] text-[#3fae63]">
              <div className="leading-[42px]">看跌</div>
              <div className="leading-[32px] text-[32px]">**%</div>
            </div>
          </div>
        </div>
      </div>
    </div>
  </div>
);

const Posts = () => (
  <div className="h-[130px] pl-[48px] pr-[49px] flex items-center">
    <div className="relative h-full w-[180px] flex items-center pt-[22px]">
      <span className="text-[44px] font-bold text-[#2c2c2c]">最新</span>
      <ChevronDown className="ml-[1px] w-[36px] h-[36px] text-[#666]" strokeWidth={1.7} />
      <span className="absolute left-[42px] bottom-[5px] w-[36px] h-[6px] rounded-full bg-[#333]" />
    </div>
    <span className="pt-[22px] text-[44px] font-medium text-[#666]">最热</span>
    <div className="ml-auto pt-[20px] flex items-center">
      <svg width="44" height="48" viewBox="890 2320 44 48">
        <path d="M893 2324H928Q927 2333 916 2341V2364M893 2324Q893 2332 904.500 2341V2357" fill="none" stroke="#2c2c2c" strokeWidth="3.400" strokeLinejoin="round" strokeLinecap="round" />
        <path d="M922 2349.500H933M922 2358H933" stroke="#f2600f" strokeWidth="4" />
      </svg>
      <span className="ml-[15px] text-[41px] text-[#5f5f5f]">全部</span>
    </div>
  </div>
);

export default function App() {
  return (
    <div className="w-[1080px] h-[2400px] overflow-hidden bg-white font-['Roboto','Noto_Sans_CJK_SC',sans-serif]">
      <StatusBar />
      <Header />
      <div className="h-[120px] bg-[#fdede5] flex items-center pl-[35px] pr-[45px] justify-between text-[#dd5b12]">
        <span className="pt-[2px] text-[42px] whitespace-nowrap">一键开通科创成长层权限！把握打新、交易机会</span>
        <svg width="32" height="34" viewBox="0 0 32 34" fill="none" stroke="#dd5b12" strokeWidth="3">
          <path d="M1 1L31 32M31 1L1 32" />
        </svg>
      </div>
      <Quote />
      <News />
      <KTabs />
      <MaRow />
      <div className="flex">
        <div className="w-[700px]">
          <KChart />
          <VolumeHeader />
          <VolumeChart />
        </div>
        <div className="w-[380px]">
          <ChipChart />
          <ChipStats />
        </div>
      </div>
      <InfoTabs />
      <Cards />
      <Posts />
    </div>
  );
}
